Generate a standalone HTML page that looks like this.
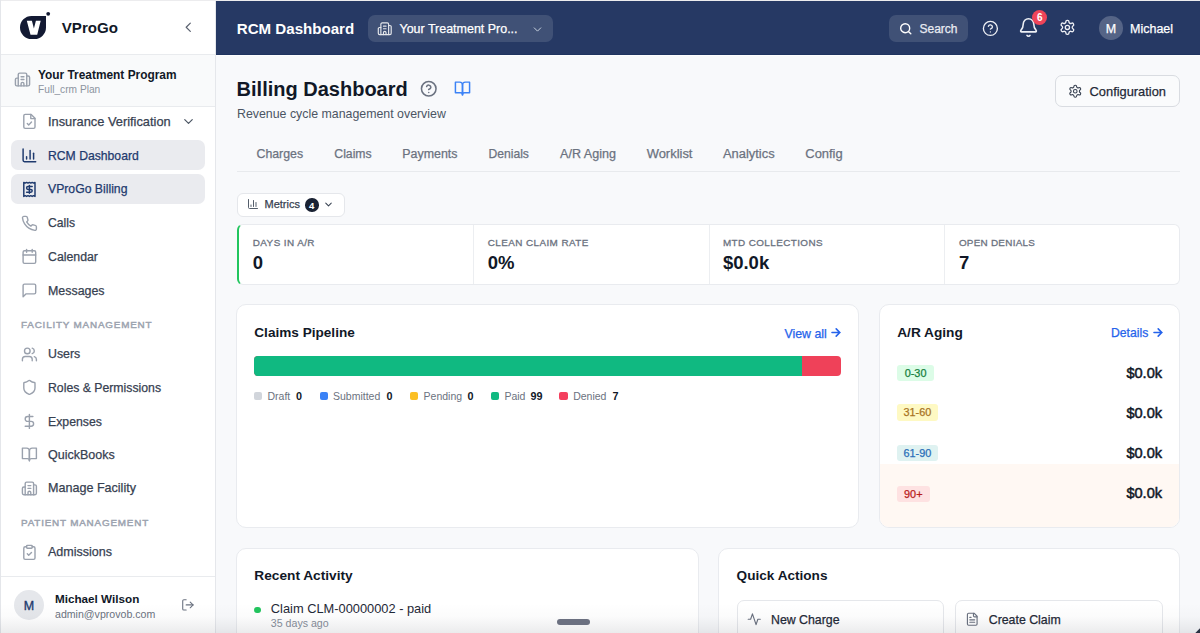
<!DOCTYPE html>
<html>
<head>
<meta charset="utf-8">
<style>
*{box-sizing:border-box;margin:0;padding:0}
html,body{width:1200px;height:633px;overflow:hidden;background:#f8f9fb;font-family:"Liberation Sans",sans-serif;position:relative}
.a{position:absolute}
.med{-webkit-text-stroke:0.25px currentColor}
.t{position:absolute;line-height:1;white-space:nowrap}
svg{position:absolute;overflow:visible}
.ic{fill:none;stroke-linecap:round;stroke-linejoin:round}
#frameT{left:0;top:0;width:1200px;height:1px;background:#ececee}
#frameL{left:0;top:0;width:1px;height:633px;background:#e4e6ea}
/* sidebar */
#side{left:1px;top:1px;width:215px;height:632px;background:#fff;border-right:1px solid #e5e7eb}
#logoarea{left:1px;top:1px;width:214px;height:54px;border-bottom:1px solid #e9ebee;background:#fff}
#org{left:1px;top:55px;width:214px;height:52px;background:#f9fafb;border-bottom:1px solid #e9ebee}
.nav{color:#374151;font-size:12.3px;-webkit-text-stroke:0.25px currentColor}
.navact{left:11px;width:194px;height:30px;border-radius:7px;background:#eaebef}
.sec{color:#9ca3af;font-size:9.9px;letter-spacing:0.8px;-webkit-text-stroke:0.45px currentColor}
/* header */
#hdr{left:216px;top:1px;width:984px;height:54px;background:#263964;border-bottom:1px solid #1f3460}
.pill{background:rgba(255,255,255,0.12);border-radius:7px}
/* main */
.card{background:#fff;border:1px solid #e9ebef;border-radius:10px}
.lbl{color:#6b7280;font-size:9.9px;letter-spacing:0.42px;-webkit-text-stroke:0.3px currentColor}
.val{color:#111827;font-size:18.5px;font-weight:bold}
.h3{color:#111827;font-size:13.5px;font-weight:bold}
.lnk{color:#2563eb;font-size:11.9px;-webkit-text-stroke:0.25px currentColor}
.lg{color:#6b7280;font-size:10.5px}
.lgv{color:#111827;font-size:10.8px;font-weight:bold}
.sq{width:8.4px;height:8.4px;border-radius:2px;top:392px}
.badge{height:16.5px;border-radius:3px;font-size:10.9px;line-height:16.5px;text-align:center;-webkit-text-stroke:0.25px currentColor}
.tab{position:absolute;top:147.7px;color:#6b7280;font-size:12.5px;-webkit-text-stroke:0.25px currentColor}
.amt{color:#111827;font-size:14.6px;-webkit-text-stroke:0.5px #111827}
</style>
</head>
<body>
<div class="a" id="frameT"></div>
<div class="a" id="frameL"></div>

<!-- SIDEBAR -->
<div class="a" id="side"></div>
<div class="a" id="logoarea"></div>
<!-- logo -->
<svg style="left:20px;top:12px" width="30" height="28" viewBox="0 0 30 28">
  <path d="M0 15.5 A11.5 11.5 0 0 1 11.5 4 H26 V15.5 A11.5 11.5 0 0 1 14.5 27 H11.5 A11.5 11.5 0 0 1 0 15.5 Z" fill="#131a33"/>
  <circle cx="28.2" cy="1.8" r="1.9" fill="#131a33"/>
  <path d="M6.8 8.8 H11.9 L13.9 16.4 L15.9 8.8 H20.7 L17.2 22.7 H10.5 Z" fill="#fff"/>
</svg>
<div class="t" style="left:61.8px;top:20.1px;font-size:15.1px;font-weight:bold;color:#111827">VProGo</div>
<svg class="ic" style="left:179.9px;top:19.4px" width="16.5" height="16.5" viewBox="0 0 24 24" stroke="#5b6270" stroke-width="1.8"><path d="m15 18-6-6 6-6"/></svg>

<div class="a" id="org"></div>
<svg class="ic" style="left:14.2px;top:71.1px" width="17" height="17" viewBox="0 0 24 24" stroke="#9aa1ad" stroke-width="2"><path d="M10 12h4"/><path d="M10 8h4"/><path d="M14 21v-3a2 2 0 0 0-4 0v3"/><path d="M6 10H4a2 2 0 0 0-2 2v7a2 2 0 0 0 2 2h16a2 2 0 0 0 2-2V9a2 2 0 0 0-2-2h-2"/><path d="M6 21V5a2 2 0 0 1 2-2h8a2 2 0 0 1 2 2v16"/></svg>
<div class="t" style="left:38px;top:69.7px;font-size:11.9px;font-weight:bold;color:#111827">Your Treatment Program</div>
<div class="t" style="left:38px;top:84.8px;font-size:10.2px;color:#8d94a0">Full_crm Plan</div>

<!-- nav -->
<svg class="ic" style="left:20.8px;top:113.2px" width="16.8" height="16.8" viewBox="0 0 24 24" stroke="#9aa1ad" stroke-width="2"><path d="M14.5 2H6a2 2 0 0 0-2 2v16a2 2 0 0 0 2 2h12a2 2 0 0 0 2-2V7.5L14.5 2z"/><path d="M14 2v6h6"/><path d="m9 15 2 2 4-4"/></svg>
<div class="t nav" style="left:48px;top:116.2px;font-size:12.83px">Insurance Verification</div>
<svg class="ic" style="left:180.5px;top:113.7px" width="15" height="15" viewBox="0 0 24 24" stroke="#4b5563" stroke-width="1.9"><path d="m6 9 6 6 6-6"/></svg>

<div class="a navact" style="top:140px"></div>
<svg class="ic" style="left:20.8px;top:147.2px" width="16.8" height="16.8" viewBox="0 0 24 24" stroke="#1e3a6e" stroke-width="2.1"><path d="M3 3v16a2 2 0 0 0 2 2h16"/><path d="M18 17V9"/><path d="M13 17V5"/><path d="M8 17v-3"/></svg>
<div class="t nav" style="left:48px;top:149.6px;color:#1e3a6e;font-size:12.19px">RCM Dashboard</div>

<div class="a navact" style="top:174px"></div>
<svg class="ic" style="left:20.8px;top:180.8px" width="16.8" height="16.8" viewBox="0 0 24 24" stroke="#1e3a6e" stroke-width="2.1"><path d="M4 2v20l2-1 2 1 2-1 2 1 2-1 2 1 2-1 2 1V2l-2 1-2-1-2 1-2-1-2 1-2-1-2 1Z"/><path d="M16 8h-6a2 2 0 1 0 0 4h4a2 2 0 1 1 0 4H8"/><path d="M12 17.5v-11"/></svg>
<div class="t nav" style="left:48px;top:183.4px;color:#1e3a6e;font-size:12.23px">VProGo Billing</div>

<svg class="ic" style="left:20.8px;top:214.5px" width="16.8" height="16.8" viewBox="0 0 24 24" stroke="#9aa1ad" stroke-width="2"><path d="M22 16.92v3a2 2 0 0 1-2.18 2 19.79 19.79 0 0 1-8.63-3.070 19.5 19.5 0 0 1-6-6 19.79 19.79 0 0 1-3.07-8.67A2 2 0 0 1 4.11 2h3a2 2 0 0 1 2 1.72 12.84 12.84 0 0 0 .7 2.81 2 2 0 0 1-.45 2.11L8.09 9.91a16 16 0 0 0 6 6l1.27-1.27a2 2 0 0 1 2.11-.45 12.84 12.84 0 0 0 2.81.7A2 2 0 0 1 22 16.92z"/></svg>
<div class="t nav" style="left:48px;top:217.2px;font-size:12.15px">Calls</div>

<svg class="ic" style="left:20.8px;top:248.2px" width="16.8" height="16.8" viewBox="0 0 24 24" stroke="#9aa1ad" stroke-width="2"><path d="M8 2v4"/><path d="M16 2v4"/><rect width="18" height="18" x="3" y="4" rx="2"/><path d="M3 10h18"/></svg>
<div class="t nav" style="left:48px;top:250.9px;font-size:12.3px">Calendar</div>

<svg class="ic" style="left:20.8px;top:281.9px" width="16.8" height="16.8" viewBox="0 0 24 24" stroke="#9aa1ad" stroke-width="2"><path d="M21 15a2 2 0 0 1-2 2H7l-4 4V5a2 2 0 0 1 2-2h14a2 2 0 0 1 2 2z"/></svg>
<div class="t nav" style="left:48px;top:284.5px;font-size:12.42px">Messages</div>

<div class="t sec" style="left:21px;top:320.2px">FACILITY MANAGEMENT</div>

<svg class="ic" style="left:20.8px;top:345.5px" width="16.8" height="16.8" viewBox="0 0 24 24" stroke="#9aa1ad" stroke-width="2"><path d="M16 21v-2a4 4 0 0 0-4-4H6a4 4 0 0 0-4 4v2"/><circle cx="9" cy="7" r="4"/><path d="M22 21v-2a4 4 0 0 0-3-3.87"/><path d="M16 3.13a4 4 0 0 1 0 7.75"/></svg>
<div class="t nav" style="left:48px;top:348.2px;font-size:12.37px">Users</div>

<svg class="ic" style="left:20.8px;top:378.9px" width="16.8" height="16.8" viewBox="0 0 24 24" stroke="#9aa1ad" stroke-width="2"><path d="M20 13c0 5-3.5 7.5-7.66 8.95a1 1 0 0 1-.67-.01C7.5 20.5 4 18 4 13V6a1 1 0 0 1 1-1c2 0 4.5-1.2 6.24-2.72a1.17 1.17 0 0 1 1.52 0C14.51 3.81 17 5 19 5a1 1 0 0 1 1 1z"/></svg>
<div class="t nav" style="left:48px;top:381.6px;font-size:12.25px">Roles &amp; Permissions</div>

<svg class="ic" style="left:20.8px;top:413.1px" width="16.8" height="16.8" viewBox="0 0 24 24" stroke="#9aa1ad" stroke-width="2"><path d="M12 2v20"/><path d="M17 5H9.5a3.5 3.5 0 0 0 0 7h5a3.5 3.5 0 0 1 0 7H6"/></svg>
<div class="t nav" style="left:48px;top:415.6px;font-size:12.27px">Expenses</div>

<svg class="ic" style="left:20.8px;top:446.4px" width="16.8" height="16.8" viewBox="0 0 24 24" stroke="#9aa1ad" stroke-width="2"><path d="M2 3h6a4 4 0 0 1 4 4v14a3 3 0 0 0-3-3H2z"/><path d="M22 3h-6a4 4 0 0 0-4 4v14a3 3 0 0 1 3-3h7z"/></svg>
<div class="t nav" style="left:48px;top:448.9px;font-size:12.52px">QuickBooks</div>

<svg class="ic" style="left:20.8px;top:479.6px" width="16.8" height="16.8" viewBox="0 0 24 24" stroke="#9aa1ad" stroke-width="2"><path d="M10 12h4"/><path d="M10 8h4"/><path d="M14 21v-3a2 2 0 0 0-4 0v3"/><path d="M6 10H4a2 2 0 0 0-2 2v7a2 2 0 0 0 2 2h16a2 2 0 0 0 2-2V9a2 2 0 0 0-2-2h-2"/><path d="M6 21V5a2 2 0 0 1 2-2h8a2 2 0 0 1 2 2v16"/></svg>
<div class="t nav" style="left:48px;top:482.3px;font-size:12.57px">Manage Facility</div>

<div class="t sec" style="left:21px;top:518.2px">PATIENT MANAGEMENT</div>

<svg class="ic" style="left:20.8px;top:543.6px" width="16.8" height="16.8" viewBox="0 0 24 24" stroke="#9aa1ad" stroke-width="2"><rect width="8" height="4" x="8" y="2" rx="1" ry="1"/><path d="M16 4h2a2 2 0 0 1 2 2v14a2 2 0 0 1-2 2H6a2 2 0 0 1-2-2V6a2 2 0 0 1 2-2h2"/><path d="m9 14 2 2 4-4"/></svg>
<div class="t nav" style="left:48px;top:546.4px;font-size:12.54px">Admissions</div>

<div class="a" style="left:1px;top:576px;width:214px;height:1px;background:#e9ebee"></div>
<div class="a" style="left:14px;top:590px;width:30px;height:30px;border-radius:50%;background:#e5e7eb"></div>
<div class="t med" style="left:14px;top:599.6px;width:30px;text-align:center;font-size:12.5px;color:#1e3a6e;-webkit-text-stroke:0.35px #1e3a6e">M</div>
<div class="t" style="left:55px;top:593.4px;font-size:11.7px;font-weight:bold;color:#111827">Michael Wilson</div>
<div class="t" style="left:55px;top:609px;font-size:10.6px;color:#6b7280">admin@vprovob.com</div>
<svg class="ic" style="left:180.8px;top:597.7px" width="13.8" height="13.8" viewBox="0 0 24 24" stroke="#6b7280" stroke-width="1.9"><path d="M9 21H5a2 2 0 0 1-2-2V5a2 2 0 0 1 2-2h4"/><path d="m16 17 5-5-5-5"/><path d="M21 12H9"/></svg>

<!-- HEADER -->
<div class="a" id="hdr"></div>
<div class="a" style="left:216px;top:55px;width:984px;height:1px;background:#fdfdfe"></div>
<div class="t" style="left:236.8px;top:20.6px;font-size:15.1px;font-weight:bold;color:#fff">RCM Dashboard</div>
<div class="a pill" style="left:368px;top:15px;width:185px;height:26.5px"></div>
<svg class="ic" style="left:377px;top:20.5px" width="15.5" height="15.5" viewBox="0 0 24 24" stroke="#e5e7eb" stroke-width="1.8"><path d="M10 12h4"/><path d="M10 8h4"/><path d="M14 21v-3a2 2 0 0 0-4 0v3"/><path d="M6 10H4a2 2 0 0 0-2 2v7a2 2 0 0 0 2 2h16a2 2 0 0 0 2-2V9a2 2 0 0 0-2-2h-2"/><path d="M6 21V5a2 2 0 0 1 2-2h8a2 2 0 0 1 2 2v16"/></svg>
<div class="t med" style="left:399.5px;top:22.9px;font-size:12.47px;color:#fff">Your Treatment Pro...</div>
<svg class="ic" style="left:531px;top:22.5px" width="13" height="13" viewBox="0 0 24 24" stroke="#cbd5e1" stroke-width="1.8"><path d="m6 9 6 6 6-6"/></svg>

<div class="a pill" style="left:889px;top:15px;width:79px;height:26.5px"></div>
<svg class="ic" style="left:898.5px;top:21.7px" width="13.5" height="13.5" viewBox="0 0 24 24" stroke="#fff" stroke-width="2.5"><circle cx="11" cy="11" r="8"/><path d="m21 21-4.3-4.3"/></svg>
<div class="t med" style="left:919.5px;top:22.9px;font-size:12px;color:#e8ebf2">Search</div>
<svg class="ic" style="left:981.6px;top:19.5px" width="16.8" height="16.8" viewBox="0 0 24 24" stroke="#eef0f5" stroke-width="1.9"><circle cx="12" cy="12" r="10"/><path d="M9.09 9a3 3 0 0 1 5.83 1c0 2-3 3-3 3"/><path d="M12 17h.01"/></svg>
<svg class="ic" style="left:1018px;top:17.1px" width="21" height="21" viewBox="0 0 24 24" stroke="#eef0f5" stroke-width="1.8"><path d="M10.268 21a2 2 0 0 0 3.464 0"/><path d="M3.262 15.326A1 1 0 0 0 4 17h16a1 1 0 0 0 .74-1.673C19.41 13.956 18 12.499 18 8A6 6 0 0 0 6 8c0 4.499-1.411 5.956-2.738 7.326"/></svg>
<div class="a" style="left:1032.2px;top:9.8px;width:15px;height:15px;border-radius:50%;background:#ef4459"></div>
<div class="t" style="left:1032.2px;top:13px;width:15px;text-align:center;font-size:10px;font-weight:bold;color:#fff">6</div>
<svg class="ic" style="left:1059px;top:19.4px" width="16.8" height="16.8" viewBox="0 0 24 24" stroke="#eef0f5" stroke-width="1.9"><path d="M12.22 2h-.44a2 2 0 0 0-2 2v.18a2 2 0 0 1-1 1.73l-.43.25a2 2 0 0 1-2 0l-.15-.08a2 2 0 0 0-2.73.73l-.22.38a2 2 0 0 0 .73 2.73l.15.1a2 2 0 0 1 1 1.72v.51a2 2 0 0 1-1 1.74l-.15.09a2 2 0 0 0-.73 2.73l.22.38a2 2 0 0 0 2.73.73l.15-.08a2 2 0 0 1 2 0l.43.25a2 2 0 0 1 1 1.73V20a2 2 0 0 0 2 2h.44a2 2 0 0 0 2-2v-.18a2 2 0 0 1 1-1.73l.43-.25a2 2 0 0 1 2 0l.15.08a2 2 0 0 0 2.73-.73l.22-.39a2 2 0 0 0-.73-2.73l-.15-.08a2 2 0 0 1-1-1.74v-.5a2 2 0 0 1 1-1.74l.15-.09a2 2 0 0 0 .73-2.73l-.22-.38a2 2 0 0 0-2.730-.73l-.15.08a2 2 0 0 1-2 0l-.43-.25a2 2 0 0 1-1-1.73V4a2 2 0 0 0-2-2z"/><circle cx="12" cy="12" r="3"/></svg>
<div class="a" style="left:1099.2px;top:16.3px;width:23.6px;height:23.6px;border-radius:50%;background:rgba(255,255,255,0.22)"></div>
<div class="t med" style="left:1099.2px;top:22.6px;width:23.6px;text-align:center;font-size:12.5px;color:#fff">M</div>
<div class="t med" style="left:1130px;top:22.6px;font-size:12.5px;color:#fff">Michael</div>


<!-- MAIN -->
<div class="t" style="left:236.6px;top:78.9px;font-size:20px;font-weight:bold;color:#111827">Billing Dashboard</div>
<svg class="ic" style="left:420.3px;top:79.6px" width="17.5" height="17.5" viewBox="0 0 24 24" stroke="#6b7280" stroke-width="2.1"><circle cx="12" cy="12" r="10"/><path d="M9.09 9a3 3 0 0 1 5.83 1c0 2-3 3-3 3"/><path d="M12 17h.01"/></svg>
<svg class="ic" style="left:454.4px;top:80.1px" width="17" height="17" viewBox="0 0 24 24" stroke="#3b82f6" stroke-width="2.1"><path d="M2 3h6a4 4 0 0 1 4 4v14a3 3 0 0 0-3-3H2z"/><path d="M22 3h-6a4 4 0 0 0-4 4v14a3 3 0 0 1 3-3h7z"/></svg>
<div class="t" style="left:237px;top:108.2px;font-size:12.37px;color:#4b5563">Revenue cycle management overview</div>

<div class="a" style="left:1055px;top:75px;width:125px;height:32px;border:1px solid #d9dce1;border-radius:7px;background:#fafbfc"></div>
<svg class="ic" style="left:1068.3px;top:84px" width="14.5" height="14.5" viewBox="0 0 24 24" stroke="#374151" stroke-width="1.8"><path d="M12.22 2h-.44a2 2 0 0 0-2 2v.18a2 2 0 0 1-1 1.73l-.43.25a2 2 0 0 1-2 0l-.15-.08a2 2 0 0 0-2.73.73l-.22.38a2 2 0 0 0 .73 2.73l.15.1a2 2 0 0 1 1 1.72v.51a2 2 0 0 1-1 1.74l-.15.09a2 2 0 0 0-.73 2.73l.22.38a2 2 0 0 0 2.73.73l.15-.08a2 2 0 0 1 2 0l.43.25a2 2 0 0 1 1 1.73V20a2 2 0 0 0 2 2h.44a2 2 0 0 0 2-2v-.18a2 2 0 0 1 1-1.73l.43-.25a2 2 0 0 1 2 0l.15.08a2 2 0 0 0 2.73-.73l.22-.39a2 2 0 0 0-.73-2.73l-.15-.08a2 2 0 0 1-1-1.74v-.5a2 2 0 0 1 1-1.74l.15-.09a2 2 0 0 0 .73-2.73l-.22-.38a2 2 0 0 0-2.73-.73l-.15.08a2 2 0 0 1-2 0l-.43-.25a2 2 0 0 1-1-1.73V4a2 2 0 0 0-2-2z"/><circle cx="12" cy="12" r="3"/></svg>
<div class="t med" style="left:1089.6px;top:86px;font-size:12.84px;color:#1f2937">Configuration</div>

<!-- tabs -->
<div class="t tab" style="left:256.5px;font-size:12.33px">Charges</div>
<div class="t tab" style="left:334.3px;font-size:12.24px">Claims</div>
<div class="t tab" style="left:402.3px;font-size:12.41px">Payments</div>
<div class="t tab" style="left:488.5px;font-size:12.14px">Denials</div>
<div class="t tab" style="left:560px;font-size:12.59px">A/R Aging</div>
<div class="t tab" style="left:646.7px;font-size:12.95px">Worklist</div>
<div class="t tab" style="left:723px;font-size:12.92px">Analytics</div>
<div class="t tab" style="left:805.3px;font-size:12.94px">Config</div>
<div class="a" style="left:237px;top:171px;width:943px;height:1px;background:#e8eaed"></div>

<!-- metrics button -->
<div class="a" style="left:237px;top:192.5px;width:107.5px;height:24.5px;border:1px solid #e5e7eb;border-radius:6px;background:#fff"></div>
<svg class="ic" style="left:246.6px;top:198.4px" width="12" height="12" viewBox="0 0 24 24" stroke="#4b5563" stroke-width="1.9"><path d="M3 3v16a2 2 0 0 0 2 2h16"/><path d="M18 17V9"/><path d="M13 17V5"/><path d="M8 17v-3"/></svg>
<div class="t med" style="left:264.5px;top:199.3px;font-size:11px;color:#374151">Metrics</div>
<div class="a" style="left:305px;top:198px;width:13.5px;height:13.5px;border-radius:50%;background:#1a2233"></div>
<div class="t" style="left:305px;top:200.6px;width:13.5px;text-align:center;font-size:9.6px;font-weight:bold;color:#fff">4</div>
<svg class="ic" style="left:322.9px;top:199px" width="11" height="11" viewBox="0 0 24 24" stroke="#374151" stroke-width="2.2"><path d="m6 9 6 6 6-6"/></svg>

<!-- KPI strip -->
<div class="a" style="left:237px;top:224px;width:943px;height:61px;background:#fff;border:1px solid #e9ebef;border-left:2px solid #22c55e;border-radius:6px;overflow:hidden">
  <div class="a" style="left:234px;top:0;width:1px;height:59px;background:#eceef1"></div>
  <div class="a" style="left:470px;top:0;width:1px;height:59px;background:#eceef1"></div>
  <div class="a" style="left:705px;top:0;width:1px;height:59px;background:#eceef1"></div>
</div>
<div class="t lbl" style="left:252.8px;top:237.5px">DAYS IN A/R</div>
<div class="t val" style="left:252.8px;top:253.9px">0</div>
<div class="t lbl" style="left:487.8px;top:237.5px">CLEAN CLAIM RATE</div>
<div class="t val" style="left:487.8px;top:253.9px">0%</div>
<div class="t lbl" style="left:722.9px;top:237.5px">MTD COLLECTIONS</div>
<div class="t val" style="left:722.9px;top:253.9px">$0.0k</div>
<div class="t lbl" style="left:958.9px;top:237.5px;letter-spacing:0.27px">OPEN DENIALS</div>
<div class="t val" style="left:958.9px;top:253.9px">7</div>

<!-- Claims pipeline -->
<div class="a card" style="left:236px;top:304px;width:623px;height:224px"></div>
<div class="t h3" style="left:254.3px;top:325.7px;font-size:13.6px">Claims Pipeline</div>
<div class="t lnk" style="left:784.5px;top:327.5px;font-size:12.34px">View all</div>
<svg class="ic" style="left:831px;top:328.3px" width="10" height="9" viewBox="0 0 10 9" stroke="#2563eb" stroke-width="1.6"><path d="M1 4.5h8M5.2 0.9 8.8 4.5 5.2 8.1"/></svg>
<div class="a" style="left:254.3px;top:356px;width:587px;height:19.7px;border-radius:4px;overflow:hidden;background:#ef4159">
  <div class="a" style="left:0;top:0;width:548px;height:20px;background:#10b981"></div>
</div>
<div class="a sq" style="left:253.9px;background:#d1d5db"></div>
<div class="t lg" style="left:267.5px;top:391.3px">Draft</div>
<div class="t lgv" style="left:296px;top:391.1px">0</div>
<div class="a sq" style="left:319.5px;background:#3b82f6"></div>
<div class="t lg" style="left:333px;top:391.3px">Submitted</div>
<div class="t lgv" style="left:386.6px;top:391.1px">0</div>
<div class="a sq" style="left:410px;background:#fbbf24"></div>
<div class="t lg" style="left:423.6px;top:391.3px">Pending</div>
<div class="t lgv" style="left:467.6px;top:391.1px">0</div>
<div class="a sq" style="left:490.6px;background:#10b981"></div>
<div class="t lg" style="left:504.4px;top:391.3px">Paid</div>
<div class="t lgv" style="left:530.4px;top:391.1px">99</div>
<div class="a sq" style="left:559.4px;background:#f43f5e"></div>
<div class="t lg" style="left:573.2px;top:391.3px">Denied</div>
<div class="t lgv" style="left:612.4px;top:391.1px">7</div>

<!-- AR aging -->
<div class="a card" style="left:879px;top:304px;width:301px;height:224px;overflow:hidden">
  <div class="a" style="left:0;top:159px;width:300px;height:70px;background:#fff8f3"></div>
</div>
<div class="t h3" style="left:897.2px;top:325.9px;font-size:13.7px">A/R Aging</div>
<div class="t lnk" style="left:1111px;top:327.3px;font-size:12.2px">Details</div>
<svg class="ic" style="left:1152.5px;top:328.4px" width="10" height="9" viewBox="0 0 10 9" stroke="#2563eb" stroke-width="1.6"><path d="M1 4.5h8M5.2 0.9 8.8 4.5 5.2 8.1"/></svg>
<div class="a badge" style="left:897px;top:364.7px;width:37.2px;background:#dcfce7;color:#15803d">0-30</div>
<div class="t amt" style="left:1126.4px;top:365.5px">$0.0k</div>
<div class="a badge" style="left:896.7px;top:404.4px;width:41.5px;background:#fef9c3;color:#a8731f">31-60</div>
<div class="t amt" style="left:1126.4px;top:405.8px">$0.0k</div>
<div class="a badge" style="left:896.7px;top:444.9px;width:41.5px;background:#dff2f1;color:#2a6fb8">61-90</div>
<div class="t amt" style="left:1126.4px;top:446.1px">$0.0k</div>
<div class="a badge" style="left:896.7px;top:485.6px;width:33.2px;background:#fee2e2;color:#b91c1c">90+</div>
<div class="t amt" style="left:1126.4px;top:486.4px">$0.0k</div>

<!-- Recent activity -->
<div class="a card" style="left:236px;top:548px;width:463px;height:120px"></div>
<div class="t h3" style="left:254.3px;top:569.3px;font-size:13.7px">Recent Activity</div>
<div class="a" style="left:254px;top:606.6px;width:6.7px;height:6.7px;border-radius:50%;background:#22c55e"></div>
<div class="t" style="left:270.8px;top:602.7px;font-size:12.83px;color:#1f2937">Claim CLM-00000002 - paid</div>
<div class="t" style="left:270.8px;top:618.2px;font-size:10.63px;color:#878e9a">35 days ago</div>

<!-- Quick actions -->
<div class="a card" style="left:718px;top:548px;width:462px;height:120px"></div>
<div class="t h3" style="left:736.6px;top:569.3px;font-size:13.6px">Quick Actions</div>
<div class="a" style="left:736.6px;top:600.3px;width:207.7px;height:50px;border:1px solid #e5e7eb;border-radius:7px;background:#fff"></div>
<svg class="ic" style="left:746.5px;top:611.5px" width="14.5" height="14.5" viewBox="0 0 24 24" stroke="#6b7280" stroke-width="1.9"><path d="M22 12h-4l-3 9L9 3l-3 9H2"/></svg>
<div class="t med" style="left:771px;top:613.6px;font-size:12.34px;color:#1f2937">New Charge</div>
<div class="a" style="left:955px;top:600.3px;width:207.5px;height:50px;border:1px solid #e5e7eb;border-radius:7px;background:#fff"></div>
<svg class="ic" style="left:964.5px;top:611.5px" width="14.5" height="14.5" viewBox="0 0 24 24" stroke="#6b7280" stroke-width="1.9"><path d="M15 2H6a2 2 0 0 0-2 2v16a2 2 0 0 0 2 2h12a2 2 0 0 0 2-2V7Z"/><path d="M14 2v4a2 2 0 0 0 2 2h4"/><path d="M10 9H8"/><path d="M16 13H8"/><path d="M16 17H8"/></svg>
<div class="t med" style="left:988.75px;top:613.6px;font-size:12.34px;color:#1f2937">Create Claim</div>

<!-- bottom overlay -->
<svg style="left:1193px;top:626px" width="7" height="7" viewBox="0 0 7 7"><path d="M7 2.3 V7 H2.3 Z" fill="#2b3345"/></svg>
<div class="a" style="left:0;top:603px;width:1200px;height:30px;background:linear-gradient(to bottom,rgba(20,24,40,0) 0%,rgba(20,24,40,0.015) 45%,rgba(20,24,40,0.06) 80%,rgba(20,24,40,0.085) 100%)"></div>
<div class="a" style="left:557px;top:619px;width:32.5px;height:5.5px;border-radius:3px;background:#6b7080"></div>

</body>
</html>
